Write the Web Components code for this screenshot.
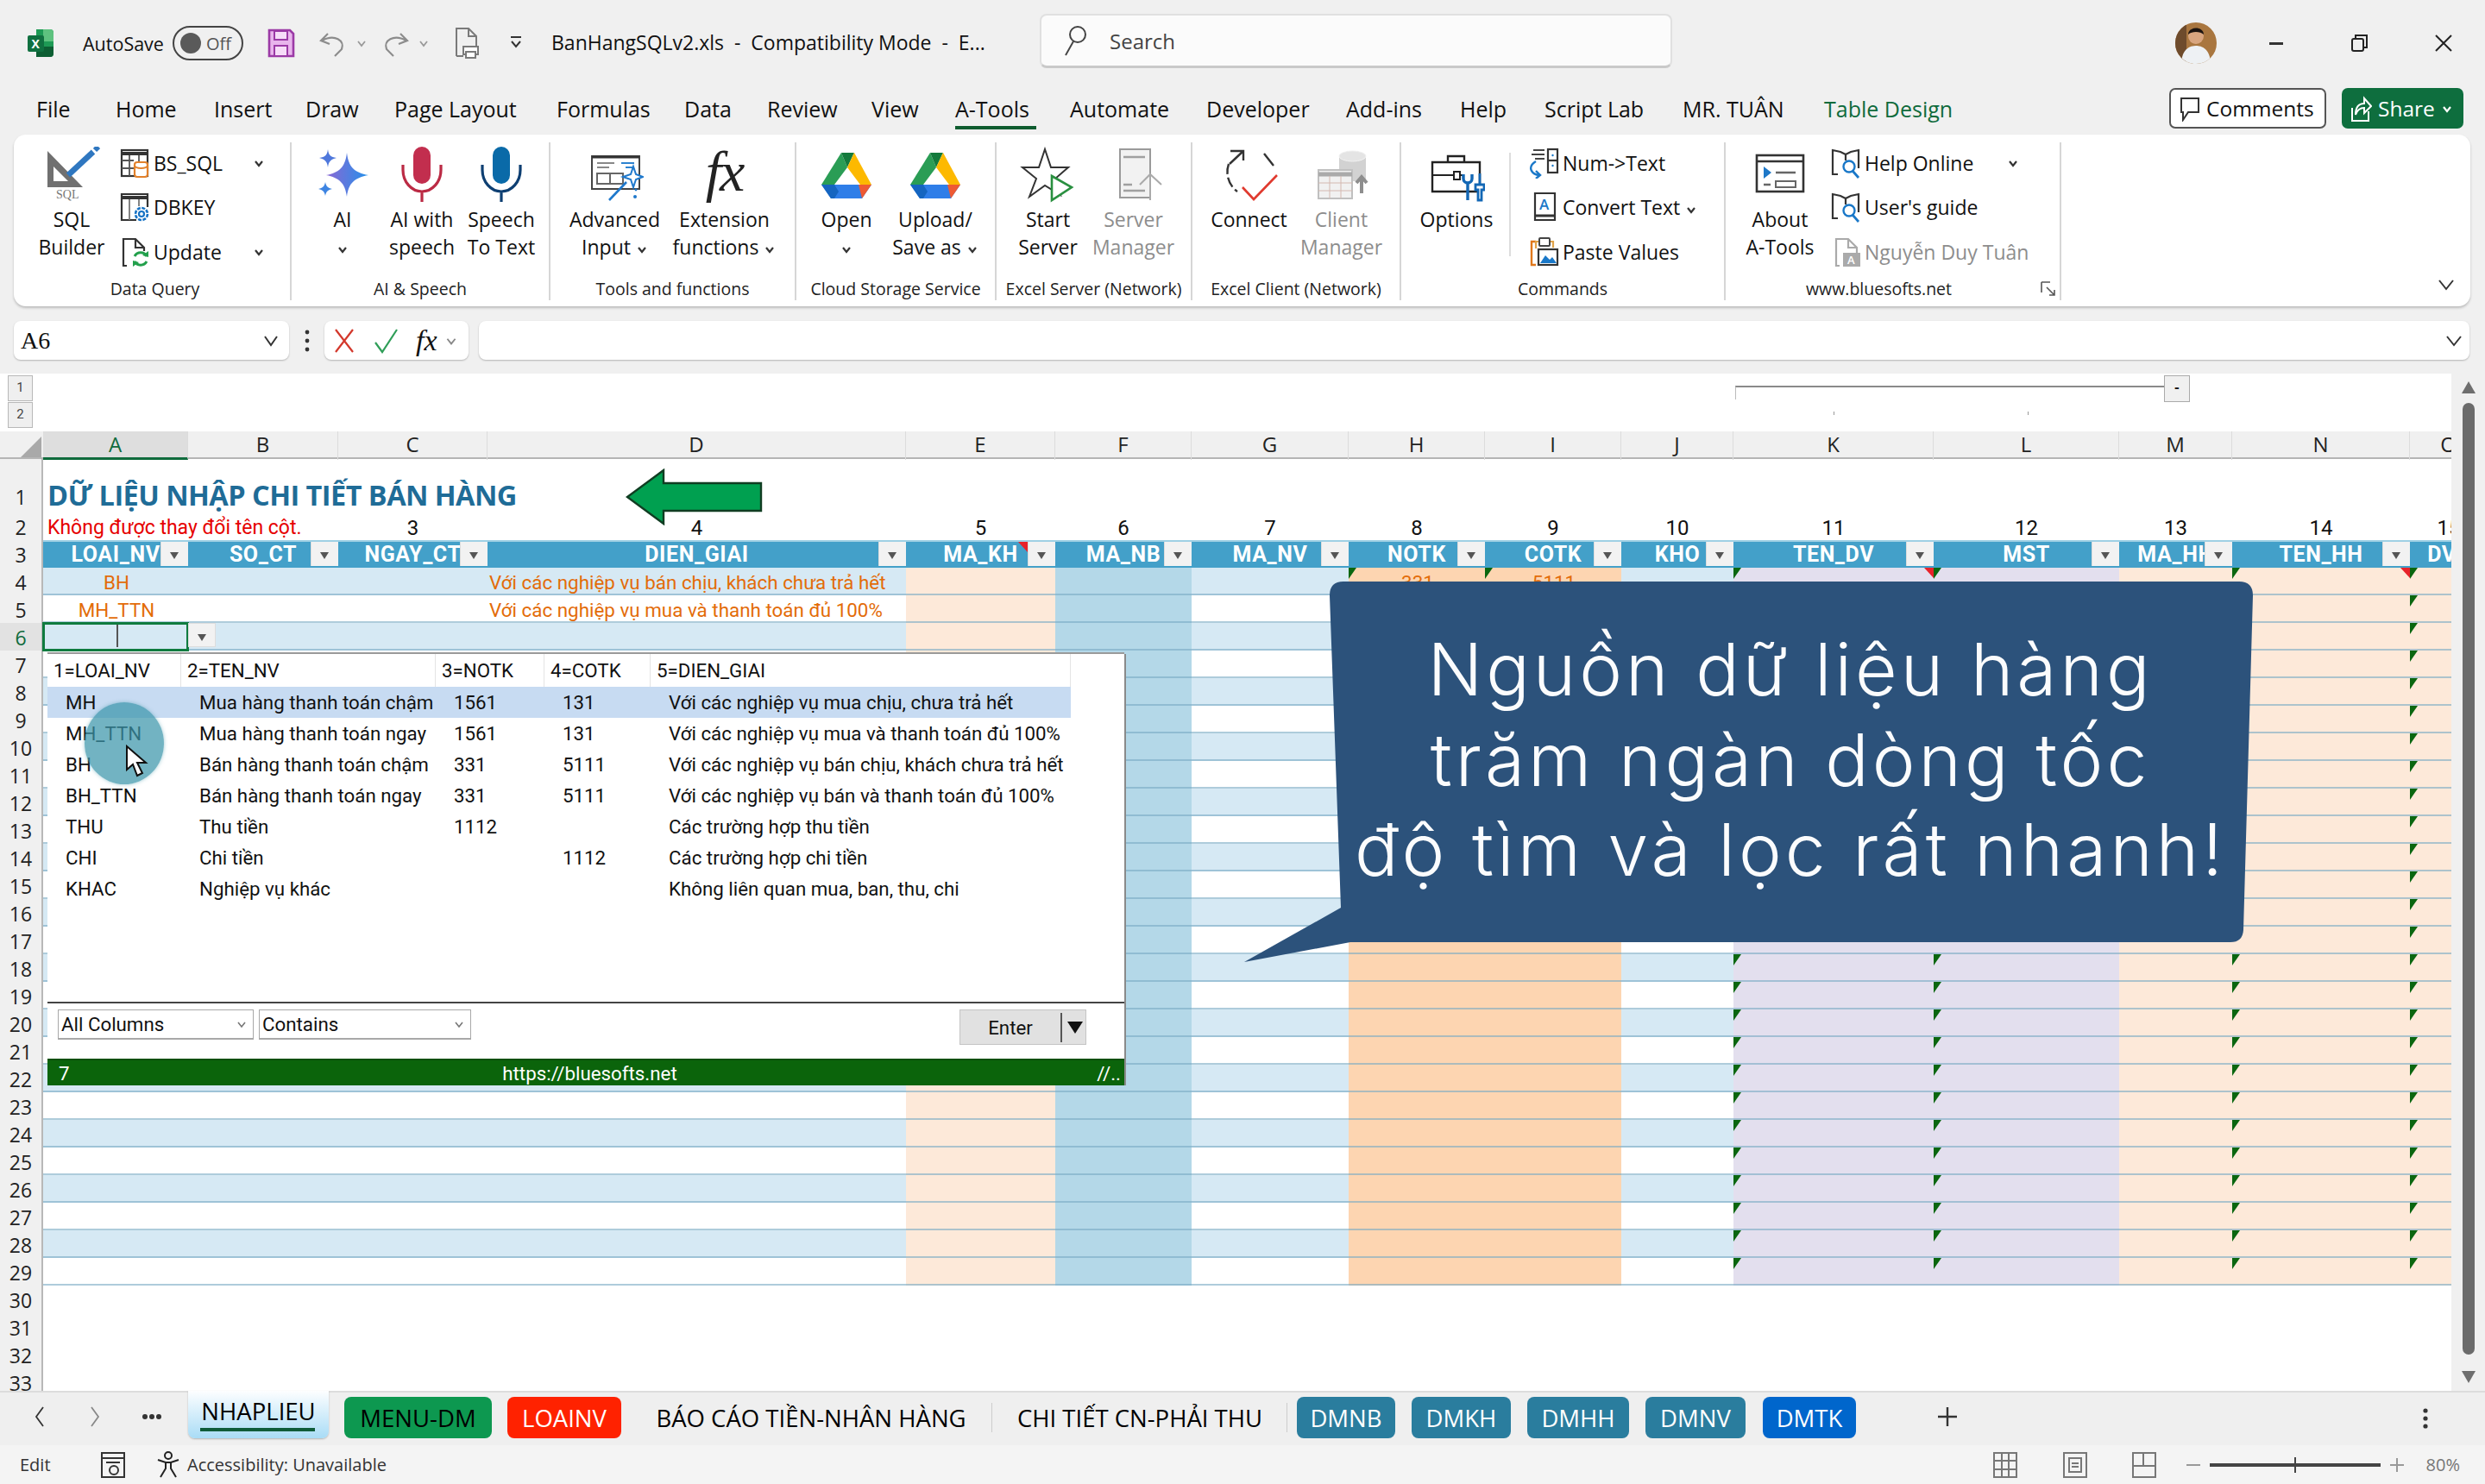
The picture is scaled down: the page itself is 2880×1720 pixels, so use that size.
<!DOCTYPE html>
<html lang="vi"><head><meta charset="utf-8"><title>Excel</title>
<style>
html,body{margin:0;padding:0;width:2880px;height:1720px;overflow:hidden;background:#f0f0f0;font-family:"Open Sans","Noto Sans",sans-serif;color:#111}
body{display:flex;flex-direction:column}
</style></head><body>
<x-titlebar></x-titlebar>
<x-tabs></x-tabs>
<x-ribbon>
  <x-group w="322" pl="22" gap="9" lp="7" label="Data Query">
    <x-big w="90" icon="sql">SQL<br>Builder</x-big>
    <x-smallcol><x-small icon="bssql" chev="1" w="190">BS_SQL</x-small><x-small icon="dbkey" w="190">DBKEY</x-small><x-small icon="update" chev="1" w="190">Update</x-small></x-smallcol>
  </x-group>
  <x-group w="300" pl="14" gap="2" label="AI &amp; Speech">
    <x-big w="90" icon="ai">AI<br><x-chev></x-chev></x-big>
    <x-big w="90" icon="micred">AI with<br>speech</x-big>
    <x-big w="90" icon="micblue">Speech<br>To Text</x-big>
  </x-group>
  <x-group w="285" pl="12" gap="2" label="Tools and functions">
    <x-big w="125" icon="adv">Advanced<br>Input <x-chev></x-chev></x-big>
    <x-big w="125" icon="fx">Extension<br>functions <x-chev></x-chev></x-big>
  </x-group>
  <x-group w="232" pl="8" gap="3" label="Cloud Storage Service">
    <x-big w="100" icon="drive">Open<br><x-chev></x-chev></x-big>
    <x-big w="100" icon="drive">Upload/<br>Save as <x-chev></x-chev></x-big>
  </x-group>
  <x-group w="227" pl="12" gap="4" label="Excel Server (Network)">
    <x-big w="95" icon="star">Start<br>Server</x-big>
    <x-big w="95" icon="srv" dim="1">Server<br>Manager</x-big>
  </x-group>
  <x-group w="242" pl="13" gap="2" label="Excel Client (Network)">
    <x-big w="105" icon="conn">Connect</x-big>
    <x-big w="105" icon="client" dim="1">Client<br>Manager</x-big>
  </x-group>
  <x-group w="376" pl="14" gap="0" label="Commands">
    <x-big w="100" icon="opt">Options</x-big>
    <x-vsep></x-vsep>
    <x-smallcol><x-small icon="num" w="200">Num-&gt;Text</x-small><x-small icon="conv" w="200">Convert Text <x-chev></x-chev></x-small><x-small icon="paste" w="200">Paste Values</x-small></x-smallcol>
  </x-group>
  <x-group w="389" pl="13" gap="7" label="www.bluesofts.net" launcher="1">
    <x-big w="100" icon="about">About<br>A-Tools</x-big>
    <x-smallcol><x-small icon="book" chev="1" w="240">Help Online</x-small><x-small icon="book" w="240">User's guide</x-small><x-small icon="adoc" dim="1" w="240">Nguyễn Duy Tuân</x-small></x-smallcol>
  </x-group>
</x-ribbon>
<x-formula></x-formula>
<x-sheet></x-sheet>
<x-sheettabs>
  <x-stab w="163" active="1" bg="linear-gradient(#fdfeff,#a9dcf6)" fg="#000">NHAPLIEU</x-stab>
  <x-stab w="171" ml="18" bg="#0d9850" fg="#000">MENU-DM</x-stab>
  <x-stab w="132" ml="18" bg="#ff2200" fg="#fff">LOAINV</x-stab>
  <x-stab w="420" ml="10" sep="1" fg="#000">BÁO CÁO TIỀN-NHÂN HÀNG</x-stab>
  <x-stab w="342" ml="0" sep="1" fg="#000">CHI TIẾT CN-PHẢI THU</x-stab>
  <x-stab w="114" ml="11" bg="#2a7d9e" fg="#fff">DMNB</x-stab>
  <x-stab w="115" ml="19" bg="#2a7d9e" fg="#fff">DMKH</x-stab>
  <x-stab w="118" ml="19" bg="#2a7d9e" fg="#fff">DMHH</x-stab>
  <x-stab w="116" ml="19" bg="#2a7d9e" fg="#fff">DMNV</x-stab>
  <x-stab w="108" ml="20" bg="#0066cc" fg="#fff">DMTK</x-stab>
</x-sheettabs>
<x-status></x-status>
<script>
const S=(w,h,vb,body,extra='')=>`<svg xmlns="http://www.w3.org/2000/svg" width="${w}" height="${h}" viewBox="0 0 ${vb}" ${extra}>${body}</svg>`;
const driveI=S(58,53,'58 53',`<path d="M23 0 L30 17 L15 37 H0Z" fill="#2a9d55"/><path d="M23 0 H38 L30 17Z" fill="#137a3c"/><path d="M38 0 L58 37 H45 L30 17Z" fill="#fdb900"/><path d="M0 37 H58 L47 53 H11Z" fill="#2f7ee8"/><path d="M0 37 H15 L20 45 L15 53 H11Z" fill="#1565c0"/><path d="M43 37 H58 L47 53Z" fill="#ee5a33"/>`);
const micI=(c,d)=>S(50,66,'50 66',`<rect x="15" y="0" width="20" height="43" rx="10" fill="${c}"/><path d="M3 21v6a22 25 0 0 0 44 0v-6M25 52v12" fill="none" stroke="${d}" stroke-width="3.2"/>`);
const IC={
 sql:S(66,66,'66 66',`<path fill-rule="evenodd" d="M5 5 L5 47 L46 47Z M12 23 L12 40 L29 40Z" fill="#707070"/><path d="M29 33 L58 6" stroke="#2f77c0" stroke-width="6.5"/><path d="M60 4 L64 0" stroke="#2f77c0" stroke-width="6"/><text x="15" y="60" font-family="Liberation Serif" font-size="14" fill="#777">SQL</text>`),
 ai:S(64,66,'64 66',`<defs><linearGradient id="g" x1="0" y1="0" x2="1" y2="0"><stop offset="0" stop-color="#8a68d4"/><stop offset="1" stop-color="#2590ea"/></linearGradient></defs><path d="M37 7 C39 24 46 30 62 33 C46 36 39 42 37 58 C35 42 28 36 13 33 C28 30 35 24 37 7Z" fill="url(#g)"/><path d="M15 3 C16 10 18 12 25 13 C18 15 16 17 15 24 C14 17 12 15 5 13 C12 12 14 10 15 3Z" fill="#4f78dc"/><path d="M12 41 C13 46 15 48 20 49 C15 50 13 52 12 57 C11 52 9 50 4 49 C9 48 11 46 12 41Z" fill="#3d84e2"/>`),
 micred:micI('#c22e4e','#bb2a44'),
 micblue:micI('#0a6aa8','#0e3f72'),
 adv:S(66,66,'66 66',`<rect x="6" y="11" width="55" height="38" fill="#fff" stroke="#444" stroke-width="2"/><path d="M6 12h55" stroke="#333" stroke-width="3"/><path d="M12 19h20M12 24h14" stroke="#888" stroke-width="2"/><path d="M40 19h15M45 24h8" stroke="#2d83d0" stroke-width="2"/><rect x="12" y="31" width="30" height="12" fill="none" stroke="#666" stroke-width="2"/><path d="M27 31v12" stroke="#666" stroke-width="2"/><path d="M26 62 L46 41" stroke="#1e78cc" stroke-width="2.6"/><path d="M54 23 l3 9 8 3-8 3-3 9-3-9-9-3 9-3z" fill="#fff" stroke="#1e78cc" stroke-width="2"/><circle cx="57" cy="50" r="1.4" fill="#1e78cc"/><circle cx="56" cy="58" r="2" fill="#1e78cc"/>`),
 fx:`<span style="font:italic 66px/60px 'Liberation Serif',serif;letter-spacing:-2px;color:#222;display:block;margin-top:-8px">fx</span>`,
 drive:driveI,
 star:S(66,66,'66 66',`<path d="M29 3 L36 24 L56 24 L41 37 L47 56 L29 45 L11 58 L19 37 L3 24 L22 24Z" fill="#fff" stroke="#333" stroke-width="2"/><path d="M37 34 L60 47 L37 62Z" fill="#fff" stroke="#2a9040" stroke-width="2.6"/>`),
 srv:S(66,66,'66 66',`<rect x="17" y="3" width="35" height="56" fill="#f2f2f2" stroke="#9a9a9a" stroke-width="2"/><path d="M21 12h25M21 44h10M21 51h25" stroke="#a0a0a0" stroke-width="2.4"/><path d="M52 62V32M40 44 L52 32 65 44" fill="none" stroke="#aaa" stroke-width="2"/>`),
 conn:S(66,66,'66 66',`<path d="M9 20 A28 28 0 0 0 19 52" fill="none" stroke="#333" stroke-width="2.4" stroke-dasharray="12 4"/><path d="M50 8 L61 22 M26 5 L10 20 M11 5 H26 V16" fill="none" stroke="#333" stroke-width="2.4"/><path d="M25 47 L38 61 L65 33" fill="none" stroke="#e03a2f" stroke-width="2.6"/>`),
 client:S(66,66,'66 66',`<path d="M30 11 a15.5 6 0 0 1 31 0 V40 H30Z" fill="#d2d2d2"/><ellipse cx="45.5" cy="11" rx="15.5" ry="6" fill="#e4e4e4" stroke="#f2f2f2"/><rect x="6" y="27" width="39" height="33" fill="#f1f1f1" stroke="#c0c0c0" stroke-width="2"/><path d="M6 32h39" stroke="#aaa" stroke-width="5"/><path d="M6 42h39M6 51h39M19 34v26M32 34v26" stroke="#d4b8b0"/><path d="M56 54 V36 M50 42 L56 35 62 42" fill="none" stroke="#8e8e8e" stroke-width="4"/>`),
 opt:S(66,66,'66 66',`<path d="M5 18h55v34H5z M23 18V11h19v7" fill="#fff" stroke="#222" stroke-width="2.4"/><path d="M5 33h25M38 33h4" stroke="#222" stroke-width="2.2"/><rect x="30" y="29" width="7" height="9" fill="#fff" stroke="#222" stroke-width="2"/><path d="M41 32v5a5 5 0 0 0 10 0v-5M46 42v20" fill="#fff" stroke="#1267b5" stroke-width="3.4"/><path d="M60 31v13M55 44h10v6h-3v12h-4V50h-3Z" fill="#fff" stroke="#1267b5" stroke-width="2.8"/>`),
 about:S(64,66,'64 66',`<rect x="5" y="10" width="54" height="42" fill="#fff" stroke="#333" stroke-width="2.6"/><path d="M5 17h54" stroke="#333" stroke-width="2.6"/><path d="M13 23 L22 30 13 37Z" fill="#1e78c8"/><path d="M27 30h23M13 44h8" stroke="#666" stroke-width="2.4"/><rect x="27" y="40" width="23" height="7" fill="#fff" stroke="#666" stroke-width="2"/>`),
 bssql:S(36,36,'36 36',`<rect x="2" y="3" width="30" height="30" fill="#fff" stroke="#333" stroke-width="2.2"/><path d="M2 7h30" stroke="#333" stroke-width="4"/><path d="M2 15h14M2 24h14M11 9v24M22 9v8" stroke="#555" stroke-width="1.8"/><rect x="17" y="17" width="15" height="17" rx="3" fill="#fff" stroke="#e2812b" stroke-width="2.2"/><path d="M17 21a7.5 3 0 0 0 15 0" fill="none" stroke="#e2812b" stroke-width="2"/>`),
 dbkey:S(36,36,'36 36',`<path d="M19 33H2V3H32V18" fill="#fff" stroke="#333" stroke-width="2.2"/><path d="M2 7h30" stroke="#333" stroke-width="4"/><path d="M11 9v24M22 9v8" stroke="#777" stroke-width="1.8"/><circle cx="25" cy="26" r="3" fill="none" stroke="#1672c4" stroke-width="2.2"/><circle cx="25" cy="26" r="7" fill="none" stroke="#1672c4" stroke-width="2.6" stroke-dasharray="4 1.5"/>`),
 update:S(36,36,'36 36',`<path d="M8 34H4V3h14l10 10v4M18 3v10h10" fill="none" stroke="#333" stroke-width="2.2"/><path d="M31 23a8 8 0 0 0-14 0M17 29a8 8 0 0 0 14 0" fill="none" stroke="#23a04c" stroke-width="3"/><path d="M26 22l7 2 0-7zM22 30l-7-2 0 7z" fill="#23a04c"/>`),
 num:S(36,36,'36 36',`<path d="M5 3h13M3 8h15M7 13h11" stroke="#444" stroke-width="2.2"/><rect x="22" y="2" width="11" height="27" fill="#fff" stroke="#333" stroke-width="2.2"/><path d="M22 15h11" stroke="#333" stroke-width="2.2"/><circle cx="27.5" cy="9" r="1.2" fill="#1a78c8"/><circle cx="27.5" cy="21" r="1.2" fill="#1a78c8"/><path d="M8 16 C-2 22 2 31 12 32 M8 27 L13 32 L8 36" fill="none" stroke="#1a78c8" stroke-width="2.4"/>`),
 conv:S(36,36,'36 36',`<path d="M7 2h23v31H7Z" fill="#fff" stroke="#333" stroke-width="2.2"/><path d="M7 28h23" stroke="#333" stroke-width="3"/><text x="12" y="21" font-family="Open Sans" font-size="17" font-weight="600" fill="#1a78c8">A</text>`),
 paste:S(36,36,'36 36',`<path d="M8 6H3V33H8" fill="none" stroke="#e0781c" stroke-width="2.4"/><path d="M28 13V6H8v8" fill="none" stroke="#e0a34a" stroke-width="2.2"/><rect x="12" y="2" width="12" height="9" rx="1" fill="#fff" stroke="#444" stroke-width="2"/><rect x="11" y="15" width="22" height="18" fill="#fff" stroke="#333" stroke-width="2.2"/><path d="M13 31 l6-9 5 5 3-3 5 7z" fill="#1a78c8"/>`),
 book:S(36,36,'36 36',`<path d="M8 31H2V3l9 2 6 3 6-3 9-2V24M17 8V15" fill="none" stroke="#333" stroke-width="2.2"/><circle cx="21" cy="22" r="6.5" fill="#fff" stroke="#1a78c8" stroke-width="2.4"/><path d="M25 27 L32 35" stroke="#1a78c8" stroke-width="2.8"/>`),
 adoc:S(36,36,'36 36',`<path d="M10 34H6V3h14l10 10v6M20 3v10h10" fill="none" stroke="#aaa" stroke-width="2.2"/><rect x="14" y="19" width="20" height="16" fill="#aaa"/><text x="19" y="32" font-family="Open Sans" font-size="13" font-weight="600" fill="#fff">A</text>`),
};
const chev=(c='#333',s=14,w=2.2)=>S(s,s,'14 14',`<path d="M3 5 L7 10 L11 5" fill="none" stroke="${c}" stroke-width="${w}"/>`);
const def=(name,css,html)=>customElements.define(name,class extends HTMLElement{connectedCallback(){if(this.shadowRoot)return;this.attachShadow({mode:'open'}).innerHTML=`<style>${css}</style>`+html(this)}});
const F='"Open Sans","Noto Sans",sans-serif', T='Roboto,"Noto Sans",sans-serif';

def('x-chev',':host{display:inline-block;vertical-align:middle;line-height:0}',()=>chev());

def('x-titlebar',`:host{display:flex;align-items:center;height:100px;flex:none;font:21.5px ${F};white-space:nowrap}
.s{display:flex;align-items:center;flex:none}
.tg{width:82px;height:40px;box-sizing:border-box;border:2.5px solid #444;border-radius:20px;display:flex;align-items:center;padding-left:7px;gap:6px;font-size:20px;color:#555}
.tg i{width:24px;height:24px;border-radius:50%;background:#5a5a5a}
.search{width:733px;height:63px;margin-top:-5px;background:#fbfbfb;border:2px solid #e0e0e0;border-bottom:3px solid #c9c9c9;border-radius:8px;box-sizing:border-box;padding-left:24px;gap:25px;font-size:24px;color:#444}
`,()=>`
<span class="s" style="margin-left:30px">${S(34,36,'34 36',`<path d="M12 2h16a4 4 0 0 1 4 4v24a4 4 0 0 1-4 4H12Z" fill="#1e9a55"/><path d="M20 2h8a4 4 0 0 1 4 4v10H20z" fill="#5ec27f"/><path d="M12 22h20v8a4 4 0 0 1-4 4H12z" fill="#0d5e33"/><rect x="2" y="9" width="19" height="19" rx="2" fill="#107040"/><text x="6.5" y="24" font-family="Open Sans" font-size="14" font-weight="700" fill="#fff">X</text>`)}</span>
<span style="margin-left:32px;width:104px">AutoSave</span>
<span class="s tg"><i></i>Off</span>
<span class="s" style="margin-left:28px">${S(32,34,'32 34',`<path d="M2 2h24l4 4v26H2Z" fill="#e8b4ec" stroke="#9b3aa6" stroke-width="2.6"/><rect x="8" y="3" width="15" height="10" fill="#f6dcf8" stroke="#9b3aa6" stroke-width="2"/><rect x="8" y="20" width="15" height="12" fill="#f6dcf8" stroke="#9b3aa6" stroke-width="2"/>`)}</span>
<span class="s" style="margin-left:28px">${S(32,34,'32 34',`<path d="M10 6 L2 14 L12 18M3 14 C18 6 30 14 26 24 L18 32" fill="none" stroke="#8c8c8c" stroke-width="2.2"/>`)}</span>
<span class="s" style="margin-left:10px">${chev('#999',14,1.8)}</span>
<span class="s" style="margin-left:16px">${S(32,34,'32 34',`<path d="M22 6 L30 14 L20 18M29 14 C14 6 2 14 6 24 L14 32" fill="none" stroke="#8c8c8c" stroke-width="2.2"/>`)}</span>
<span class="s" style="margin-left:10px">${chev('#999',14,1.8)}</span>
<span class="s" style="margin-left:28px">${S(30,38,'30 38',`<path d="M3 34V2h14l9 9v12M17 2v9h9M3 34h8" fill="none" stroke="#7a7a7a" stroke-width="2"/><rect x="11" y="23" width="17" height="9" fill="#fff" stroke="#7a7a7a" stroke-width="2"/><rect x="14" y="29" width="11" height="7" fill="#fff" stroke="#7a7a7a" stroke-width="2"/>`)}</span>
<span class="s" style="margin-left:34px">${S(16,18,'16 18',`<path d="M2 2h12M3 7 L8 13 13 7" fill="none" stroke="#333" stroke-width="2"/>`)}</span>
<span style="margin-left:33px;width:566px;font-size:23px;margin-top:-3px">BanHangSQLv2.xls&nbsp; - &nbsp;Compatibility Mode&nbsp; - &nbsp;E...</span>
<span class="s search">${S(30,38,'30 38',`<circle cx="18" cy="12" r="9" fill="none" stroke="#444" stroke-width="2"/><path d="M13 20 L4 36" stroke="#444" stroke-width="2"/>`)}Search</span>
<span class="s" style="margin-left:582px">${S(50,50,'50 50',`<clipPath id="c"><circle cx="25" cy="25" r="24"/></clipPath><g clip-path="url(#c)"><rect width="50" height="50" fill="#a9763f"/><rect x="0" y="0" width="14" height="50" fill="#6e4b2c"/><path d="M8 50 C8 32 18 28 25 28 C32 28 42 32 42 50Z" fill="#eef1f4"/><circle cx="25" cy="17" r="9" fill="#d8a57f"/><path d="M16 15 C16 5 34 5 34 15 C30 11 20 11 16 15Z" fill="#1c1410"/></g>`)}</span>
<span class="s" style="margin-left:60px;width:16px;height:3px;background:#333"></span>
<span class="s" style="margin-left:78px">${S(22,22,'22 22',`<rect x="2" y="6" width="13" height="14" rx="2" fill="none" stroke="#222" stroke-width="2"/><path d="M6 5V2h13v14h-3" fill="none" stroke="#222" stroke-width="2"/>`)}</span>
<span class="s" style="margin-left:75px">${S(22,22,'22 22',`<path d="M2 2 L20 20 M20 2 L2 20" stroke="#222" stroke-width="2"/>`)}</span>`);

const TABS=[['File',92],['Home',114],['Insert',106],['Draw',103],['Page Layout',188],['Formulas',148],['Data',96],['Review',121],['View',97],['A-Tools',133],['Automate',158],['Developer',162],['Add-ins',132],['Help',98],['Script Lab',160],['MR. TUÂN',164],['Table Design',240]];
def('x-tabs',`:host{display:flex;align-items:center;height:56px;flex:none;padding-left:42px;font:25px ${F};white-space:nowrap;box-sizing:border-box;width:2880px}
.t{flex:none;position:relative;line-height:51px;height:54px}
.on{font-weight:500}
.on::after{content:"";position:absolute;left:0;width:94px;bottom:5px;height:4px;background:#0e5c2f}
.btn{height:47px;box-sizing:border-box;border-radius:7px;display:flex;align-items:center;margin-top:-5px;flex:none;font-size:24.5px}
.c{margin-left:auto;width:182px;border:2px solid #555;background:#fff;padding-left:10px;gap:7px}
.sh{margin-left:18px;margin-right:25px;width:141px;background:#0e6e3e;color:#fff;padding-left:9px;gap:7px}
`,()=>TABS.map(([n,w])=>`<span class="t ${n=='A-Tools'?'on':''}" style="width:${w}px;${n=='Table Design'?'color:#0f6b3c':''}">${n}</span>`).join('')+`
<span class="btn c">${S(24,30,'24 30',`<path d="M2 3h20v16H10L4 28v-9H2Z" fill="none" stroke="#333" stroke-width="2"/>`)}Comments</span>
<span class="btn sh">${S(26,34,'26 34',`<path d="M3 16v15h19V20" fill="none" stroke="#fff" stroke-width="2"/><path d="M7 24 C7 14 12 11 17 11V5l8 9-8 8v-6C12 16 9 18 7 24Z" fill="none" stroke="#fff" stroke-width="2"/>`)}Share${chev('#fff')}</span>`);

def('x-ribbon',`:host{display:flex;flex:none;margin-left:16px;width:2847px;height:199px;box-sizing:border-box;padding:9px 0 7px;background:#fff;border-radius:14px;box-shadow:0 2px 3px rgba(0,0,0,.22)}
.col{margin-left:auto;align-self:flex-end;margin-right:17px;margin-bottom:9px;line-height:0}`,()=>`<slot></slot><span class="col">${S(22,18,'22 18',`<path d="M3 4 L11 14 L19 4" fill="none" stroke="#333" stroke-width="2"/>`)}</span>`);

def('x-group',`:host{display:flex;flex-direction:column;flex:none;box-sizing:border-box;border-right:2px solid #d6d6d6;font:23px/32px ${F};white-space:nowrap}
.c{flex:1;display:flex;min-height:0}
.l{height:26px;flex:none;font-size:19.5px;line-height:26px;text-align:center;color:#222;display:flex;justify-content:center;align-items:center;position:relative}
.la{position:absolute;right:3px;top:3px;line-height:0}`,h=>{const w=h.getAttribute('w'),pl=h.getAttribute('pl'),g=h.getAttribute('gap');h.style.width=w+'px';
return `<div class="c" style="padding-left:${pl}px;gap:${g}px"><slot></slot></div><div class="l" style="padding-left:${h.getAttribute('lp')||0}px;${h.hasAttribute('launcher')?'padding-right:32px':''}">${h.getAttribute('label')}${h.hasAttribute('launcher')?`<span class="la">${S(20,20,'20 20',`<path d="M2 2h10M2 2v12M8 8 L17 17M17 11v6h-6" fill="none" stroke="#555" stroke-width="1.6"/>`)}</span>`:''}</div>`});

def('x-vsep',`:host{display:block;width:2px;height:120px;margin:12px 19px 0 11px;background:#ddd;flex:none}`,()=>'');
def('x-smallcol',`:host{display:flex;flex-direction:column;flex:none;margin-top:-2px}`,()=>'<slot></slot>');
def('x-big',`:host{display:flex;flex-direction:column;align-items:center;text-align:center;flex:none;padding-top:3px;box-sizing:border-box}
.i{height:70px;display:flex;align-items:center;justify-content:center;flex:none;line-height:0}
.i span{line-height:66px}`,h=>{h.style.width=h.getAttribute('w')+'px';if(h.hasAttribute('dim'))h.style.color='#8d8d8d';return `<div class="i">${IC[h.getAttribute('icon')]}</div><div><slot></slot></div>`});
def('x-small',`:host{display:flex;align-items:center;height:51.5px;flex:none;gap:7px}
.i{width:40px;display:flex;justify-content:center;line-height:0;flex:none}
.c{margin-left:auto;margin-right:20px;line-height:0}`,h=>{h.style.width=h.getAttribute('w')+'px';if(h.hasAttribute('dim'))h.style.color='#8d8d8d';return `<span class="i">${IC[h.getAttribute('icon')]}</span><span style="margin-left:-6px"><slot></slot></span>${h.hasAttribute('chev')?`<span class="c">${chev()}</span>`:''}`});

def('x-formula',`:host{display:flex;align-items:center;flex:none;height:45px;margin:17px 0 16px;padding-left:16px;font:28px "Liberation Serif",serif}
.b{height:45px;box-sizing:border-box;background:#fff;border-radius:8px;box-shadow:0 1px 2px rgba(0,0,0,.25);display:flex;align-items:center;flex:none}
.dots{width:41px;display:flex;justify-content:center;flex:none}
`,()=>`<span class="b" style="width:319px;padding:0 12px 0 8px;justify-content:space-between">A6${S(18,14,'18 14',`<path d="M2 2 L9 12 L16 2" fill="none" stroke="#333" stroke-width="2"/>`)}</span>
<span class="dots">${S(6,30,'6 30',`<circle cx="3" cy="5" r="2.4" fill="#333"/><circle cx="3" cy="15" r="2.4" fill="#333"/><circle cx="3" cy="25" r="2.4" fill="#333"/>`)}</span>
<span class="b" style="width:167px;padding-left:11px;gap:20px">${S(26,32,'26 32',`<path d="M2 3 L22 29M22 3 L2 29" stroke="#d3382c" stroke-width="2.2"/>`)}${S(30,32,'30 32',`<path d="M2 18 L10 29 L27 3" fill="none" stroke="#2f9e58" stroke-width="2.2"/>`)}<span style="font:italic 34px 'Liberation Serif',serif;margin-left:-1px">fx</span><span style="margin-left:-12px;line-height:0">${chev('#888',16,1.6)}</span></span>
<span class="b" style="width:2307px;margin-left:12px;justify-content:flex-end;padding-right:8px">${S(20,14,'20 14',`<path d="M2 2 L10 12 L18 2" fill="none" stroke="#333" stroke-width="2"/>`)}</span>`);

const COLS=[['A',168,'LOAI_NV'],['B',174,'SO_CT'],['C',173,'NGAY_CT'],['D',485,'DIEN_GIAI'],['E',173,'MA_KH'],['F',158,'MA_NB'],['G',182,'MA_NV'],['H',158,'NOTK'],['I',158,'COTK'],['J',130,'KHO'],['K',232,'TEN_DV'],['L',215,'MST'],['M',131,'MA_HH'],['N',206,'TEN_HH'],['O',90,'DVT']];
const FILL={E:'#fde9d9',F:'#b4d8e8',H:'#fdd5b1',I:'#fdd5b1',K:'#e3dfee',L:'#e3dfee',M:'#fde9d9',N:'#fde9d9',O:'#fde9d9'};
function buildGrid(){
 const cols=COLS.map(c=>c[1]+'px').join(' ');let o='';
 const tri=(t)=>`<i class="${t}"></i>`;
 for(let r=1;r<=33;r++){
  o+=`<div class="rh ${r==6?'sel':''} ${r==1?'r1':''}">${r}</div>`;
  COLS.forEach(([L,w,name],i)=>{
   let cls='c',txt='',ex='',st='';
   if(r==1){ if(L=='A'){cls+=' title';txt='DỮ LIỆU NHẬP CHI TIẾT BÁN HÀNG'} }
   else if(r==2){ if(L=='A'){cls+=' warn';txt='Không được thay đổi tên cột.'} else if(L!='B'){cls+=' num';txt=i+1} }
   else if(r==3){ cls+=' hd';txt=name;ex=`<b class="f"></b>`; if(L=='E')ex+=tri('rt') }
   else if(r<=29){
     cls+=' d';const band=r%2==0?'#d6e9f4':'#fff';st=`background:${FILL[L]||band}`;
     if(r==4){ if(L=='A'){txt='BH';cls+=' o ctr'} if(L=='D'){txt='Với các nghiệp vụ bán chịu, khách chưa trả hết';cls+=' o'} if(L=='H'){txt='331';cls+=' o ctr'} if(L=='I'){txt='5111';cls+=' o ctr'} }
     if(r==5){ if(L=='A'){txt='MH_TTN';cls+=' o ctr'} if(L=='D'){txt='Với các nghiệp vụ mua và thanh toán đủ 100%';cls+=' o'} }
     if('KLNO'.includes(L)) ex+=tri('gr');
     if(r==4&&'HI'.includes(L)) ex+=tri('gr');
     if(r==4&&(L=='K'||L=='N')) ex+=tri('rt');
     if(r==6&&L=='A') { cls+=' act'; ex+=`<u class="car"></u><b class="dd"></b>`; }
   }
   o+=`<div class="${cls}" style="${st}">${txt?`<span>${txt}</span>`:''}${ex}</div>`;
  });
 }
 return {cols,o};
}
def('x-sheet',`:host{display:flex;flex:none;height:1179px;width:2880px;overflow:hidden}
.main{width:2841px;flex:none;background:#fff;position:relative;overflow:hidden;display:flex;flex-direction:column}
.out{height:67px;flex:none;display:flex;padding-top:2px;box-sizing:border-box}
.obtn{width:29px;height:30px;margin-left:9px;box-sizing:border-box;border:1.5px solid #b8b8b8;background:#efefef;font:15px/27px ${T};text-align:center;color:#444}
.ol{margin-left:1973px;display:flex;flex-direction:column}
.ol1{display:flex;height:31px}
.line{width:497px;height:16px;border-top:2.5px solid #8a8a8a;border-left:1.5px solid #bbb;box-sizing:border-box;margin-top:12px}
.mbox{width:30px;height:31px;box-sizing:border-box;border:1.5px solid #aaa;background:#f0f0f0;font:700 16px/28px ${T};text-align:center}
.tick{display:flex;padding-left:114px;gap:224px;margin-top:11px}
.tick i{width:1px;height:4px;background:#999}
.ch{display:grid;height:32px;flex:none;background:#f0f0f0;font:24px/29px ${F};color:#222;box-sizing:border-box;border-bottom:2.5px solid #b5b5b5}
.ch div{text-align:center;border-right:1px solid #dcdcdc}
.ch .on{background:#dedede;color:#0f6b3c;border-bottom:3px solid #0f6b3c;height:29.5px}
.sa{display:flex;align-items:flex-end;justify-content:flex-end;padding:0 2px 3px 0;border:0!important}
.g{display:grid;font:22.4px/26px ${T};flex:1;min-height:0;overflow:hidden;align-content:start;grid-template-rows:62px repeat(32,32px)}
.rh{background:#f0f0f0;font:23px/26px ${F};text-align:center;color:#222;border-right:2px solid #b8b8b8;box-sizing:border-box;display:flex;justify-content:center;align-items:center;position:relative;padding-top:2px;min-height:0}
.rh.r1{align-items:flex-end;padding-bottom:5px}
.rh.sel{background:#e2e2e2;color:#0f6b3c}
.c{position:relative;white-space:nowrap;display:flex;align-items:center;box-sizing:border-box;min-width:0;min-height:0}
.title{overflow:visible;align-items:flex-end;padding:0 0 1px 5px;color:#1f6c97;font:700 32.5px/38px "Open Sans","Noto Sans",sans-serif;letter-spacing:-.55px}
.warn{color:#e60000;padding:3px 0 0 5px;font-size:23px}
.num{justify-content:center;font-size:24px;padding-top:3px}
.hd{background:#43a0c9;color:#fff;font-weight:700;font-size:25px;letter-spacing:.6px;justify-content:center;overflow:hidden;border-top:2px solid #9fd0e4}
.f{position:absolute;right:0;top:0;bottom:2px;width:31px;background:#f2f2f2;border-left:1px solid #ddd}
.f::after,.dd::after{content:"";position:absolute;left:10px;top:12px;border:5.5px solid transparent;border-top:8px solid #555;border-bottom:0}
.d{border-bottom:2.5px solid rgba(120,170,195,.6);padding-top:3px}
.o{color:#e36c09;padding-left:2px;overflow:visible}
.ctr{justify-content:center}
.act{outline:3px solid #0f7b3f;outline-offset:-2px;z-index:2}
.car{position:absolute;left:85px;top:2px;bottom:2px;width:1.5px;background:#555}
.dd{position:absolute;left:100%;top:0;bottom:2px;width:32px;margin-left:0;background:#f2f2f2;border:1px solid #ddd;box-sizing:border-box}
.gr{position:absolute;left:0;top:0;width:9px;height:13px;background:#0a660f;clip-path:polygon(0 0,100% 0,0 100%);z-index:1}
.rt{position:absolute;right:0;top:0;width:11px;height:12px;background:#e8222a;clip-path:polygon(0 0,100% 0,100% 100%);z-index:1}
.hd .rt{right:32px}
.arrow{position:absolute;left:725px;top:110px;line-height:0}
.sb{width:39px;flex:none;background:#f0f0f0;display:flex;flex-direction:column;align-items:center;padding:9px 0 0 0;box-sizing:border-box}
.up{width:0;height:0;border:8px solid transparent;border-bottom:14px solid #6e6e6e;border-top:0}
.dn{width:0;height:0;border:8px solid transparent;border-top:14px solid #6e6e6e;border-bottom:0;margin-top:19px}
.th{width:14px;height:1103px;border-radius:7px;background:#6b6b6b;margin-top:11px}
`,()=>{const {cols,o}=buildGrid();
 return `<div class="main">
 <div class="out"><div><div class="obtn">1</div><div class="obtn" style="margin-top:1px">2</div></div>
 <div class="ol"><div class="ol1"><div class="line"></div><div class="mbox">-</div></div><div class="tick"><i></i><i></i></div></div></div>
 <div class="ch" style="grid-template-columns:50px ${cols}"><div class="sa">${S(24,24,'24 24','<path d="M24 0V24H0Z" fill="#a9a9a9"/>')}</div>${COLS.map(c=>`<div class="${c[0]=='A'?'on':''}">${c[0]}</div>`).join('')}</div>
 <div class="g" style="grid-template-columns:50px ${cols}">${o}</div>
 <div class="arrow">${S(160,66,'160 66','<path d="M44 2 L2 33 L44 64 V49 H157 V17 H44Z" fill="#00a050" stroke="#103d22" stroke-width="2.4"/>')}</div>
 <x-popup></x-popup>
 <x-callout></x-callout>
 </div>
 <div class="sb"><div class="up"></div><div class="th"></div><div class="dn"></div></div>`});

const POPROWS=[['MH','Mua hàng thanh toán chậm','1561','131','Với các nghiệp vụ mua chịu, chưa trả hết'],['MH_TTN','Mua hàng thanh toán ngay','1561','131','Với các nghiệp vụ mua và thanh toán đủ 100%'],['BH','Bán hàng thanh toán chậm','331','5111','Với các nghiệp vụ bán chịu, khách chưa trả hết'],['BH_TTN','Bán hàng thanh toán ngay','331','5111','Với các nghiệp vụ bán và thanh toán đủ 100%'],['THU','Thu tiền','1112','','Các trường hợp thu tiền'],['CHI','Chi tiền','','1112','Các trường hợp chi tiền'],['KHAC','Nghiệp vụ khác','','','Không liên quan mua, ban, thu, chi']];
def('x-popup',`:host{position:absolute;left:55px;top:325px;width:1248px;height:500px;background:#fff;display:flex;flex-direction:column;font:22.3px/30px ${T};color:#111;box-sizing:border-box;box-shadow:0 -2px 0 #9a9a9a,2px 0 0 #8a8a8a;white-space:nowrap;z-index:5}
.h,.r{display:grid;grid-template-columns:155px 295px 126px 123px 487px;width:1186px}
.h{height:38px;align-items:center}
.h span{padding-left:7px;height:38px;line-height:38px;border-right:1.5px solid #e4e4e4;box-sizing:border-box}
.list{height:365px;flex:none}
.r{height:36px;align-items:center}
.r span{padding-left:21px}
.r:first-child{background:#c7dbf2}
.foot{height:66px;flex:none;border-top:2.5px solid #444;display:flex;padding:7px 44px 0 12px;box-sizing:border-box;gap:6px}
.sel{height:35px;box-sizing:border-box;border:1.5px solid #a8a8a8;border-bottom-width:2.5px;display:flex;align-items:center;justify-content:space-between;padding:0 6px 0 3px}
.en{margin-left:auto;width:147px;height:41px;background:#e1e1e1;border:1.5px solid #c4c4c4;box-sizing:border-box;display:flex;align-items:center}
.en b{font-weight:400;width:116px;text-align:center}
.en i{width:2px;height:34px;background:#555}
.en u{margin-left:6px;width:0;height:0;border:9px solid transparent;border-top:14px solid #111;border-bottom:0}
.bar{height:31px;flex:none;background:#0b640b;border-top:2px solid #0a4f0a;color:#fff;display:grid;grid-template-columns:1fr 1fr 1fr;align-items:center;padding:0 4px 3px 13px;box-sizing:border-box}
.circle{position:absolute;left:43px;top:56px;width:92px;height:95px;border-radius:50%;background:rgba(60,150,170,.72);box-shadow:0 0 4px rgba(60,150,170,.5)}
.cur{position:absolute;left:90px;top:105px;line-height:0}
`,()=>`<div class="h"><span>1=LOAI_NV</span><span>2=TEN_NV</span><span>3=NOTK</span><span>4=COTK</span><span>5=DIEN_GIAI</span></div>
<div class="list">${POPROWS.map(r=>`<div class="r">${r.map(t=>`<span>${t}</span>`).join('')}</div>`).join('')}</div>
<div class="foot"><div class="sel" style="width:227px">All Columns${chev('#777',14,1.6)}</div><div class="sel" style="width:246px">Contains${chev('#777',14,1.6)}</div><div class="en"><b>Enter</b><i></i><u></u></div></div>
<div class="bar"><span>7</span><span style="text-align:center">https://bluesofts.net</span><span style="text-align:right">//..</span></div>
<div class="circle"></div>
<div class="cur">${S(28,38,'28 38','<path d="M2 2 V29 L9 23 L14 36 L20 33 L14 21 L24 21Z" fill="#fff" stroke="#111" stroke-width="2"/>')}</div>`);

def('x-callout',`:host{position:absolute;left:1440px;top:237px;width:1180px;height:450px;z-index:6}
svg{position:absolute;left:0;top:0}
.t{position:absolute;left:115px;top:54px;width:1040px;text-align:center;font:300 84px/104.5px Inter,"Open Sans",sans-serif;letter-spacing:4px;color:#fbfcfd;white-space:nowrap}`,()=>`${S(1180,450,'1180 450','<path d="M117 4 H1155 Q1171 4 1171 20 L1160 408 Q1159 422 1145 422 H125 L2 445 L114 382 L101 20 Q101 4 117 4Z" fill="#2c527b"/>')}
<div class="t">Nguồn dữ liệu hàng<br>trăm ngàn dòng tốc<br>độ tìm và lọc rất nhanh!</div>`);

def('x-sheettabs',`:host{display:flex;align-items:flex-start;flex:none;height:63px;box-sizing:border-box;border-top:0;background:linear-gradient(#dcdcdc 0 2px,#efefef 2px);font:27.5px ${F};white-space:nowrap;position:relative}
.nav{width:218px;height:55px;display:flex;align-items:center;flex:none;padding-left:35px;box-sizing:border-box;margin-top:2px;gap:42px}
.plus{margin-left:94px;margin-top:18px;line-height:0}
.dots{margin-left:auto;margin-right:66px;margin-top:20px;line-height:0}`,()=>`<div class="nav">${S(22,26,'14 26','<path d="M11 2 L3 13 L11 24" fill="none" stroke="#333" stroke-width="1.8"/>')}${S(22,26,'14 26','<path d="M3 2 L11 13 L3 24" fill="none" stroke="#888" stroke-width="1.8"/>')}${S(26,8,'26 8','<circle cx="5" cy="4" r="3" fill="#333"/><circle cx="13" cy="4" r="3" fill="#333"/><circle cx="21" cy="4" r="3" fill="#333"/>')}</div><slot></slot>
<span class="plus">${S(24,24,'24 24','<path d="M12 1V23M1 12H23" stroke="#333" stroke-width="2.4"/>')}</span>
<span class="dots">${S(6,24,'6 24','<circle cx="3" cy="3" r="2.6" fill="#333"/><circle cx="3" cy="12" r="2.6" fill="#333"/><circle cx="3" cy="21" r="2.6" fill="#333"/>')}</span>`);

def('x-stab',`:host{display:flex;flex:none;box-sizing:border-box;align-items:center;justify-content:center;margin-top:7px;height:48px;border-radius:8px;position:relative}
:host([sep])::after{content:"";position:absolute;right:0;top:7px;bottom:7px;width:1.5px;background:#ccc}
:host([active]){margin-top:0;height:55px;border-radius:0 0 8px 8px;align-items:flex-start;padding-top:5px;box-shadow:0 1px 2px rgba(0,0,0,.25)}
:host([active])::after{content:"";position:absolute;left:14px;right:16px;bottom:8px;height:4px;background:#0f5c3a}`,h=>{h.style.width=h.getAttribute('w')+'px';h.style.marginLeft=(h.getAttribute('ml')||0)+'px';if(h.getAttribute('bg'))h.style.background=h.getAttribute('bg');h.style.color=h.getAttribute('fg');return '<span><slot></slot></span>'});

def('x-status',`:host{display:flex;align-items:center;flex:none;height:45px;background:#f4f4f4;font:20px ${F};color:#333;white-space:nowrap}
.s{display:flex;align-items:center;flex:none;line-height:0}`,()=>`<span style="margin-left:23px;width:92px">Edit</span>
<span class="s">${S(32,32,'32 32','<rect x="3" y="2" width="26" height="28" fill="none" stroke="#333" stroke-width="2"/><path d="M3 8h26M8 13h16" stroke="#333" stroke-width="2"/><circle cx="17" cy="22" r="5" fill="none" stroke="#333" stroke-width="2"/>')}</span>
<span class="s" style="margin-left:33px">${S(30,32,'30 32','<circle cx="15" cy="5" r="4" fill="none" stroke="#222" stroke-width="2"/><path d="M3 10 L12 13 H18 L27 10 M12 13 V20 L6 30 M18 13 V20 L24 30" fill="none" stroke="#222" stroke-width="2"/>')}</span>
<span style="margin-left:7px">Accessibility: Unavailable</span>
<span class="s" style="margin-left:auto">${S(30,32,'30 32','<rect x="2" y="2" width="26" height="28" fill="none" stroke="#777" stroke-width="2"/><path d="M2 11h26M2 21h26M11 2v28M19 2v28" stroke="#777" stroke-width="2"/>')}</span>
<span class="s" style="margin-left:51px">${S(30,32,'30 32','<rect x="2" y="2" width="26" height="28" fill="none" stroke="#777" stroke-width="2"/><rect x="8" y="8" width="14" height="16" fill="none" stroke="#777" stroke-width="2"/><path d="M11 14h8M11 18h8" stroke="#777" stroke-width="2"/>')}</span>
<span class="s" style="margin-left:50px">${S(30,32,'30 32','<rect x="2" y="2" width="26" height="28" fill="none" stroke="#777" stroke-width="2"/><path d="M2 17h26M14 2v15" stroke="#777" stroke-width="2"/>')}</span>
<span class="s" style="margin-left:34px;width:16px;height:2px;background:#999"></span>
<span class="s" style="margin-left:11px;width:198px;height:4px;background:#444;justify-content:center"><i style="width:2px;height:18px;background:#444"></i></span>
<span class="s" style="margin-left:11px">${S(16,16,'16 16','<path d="M8 0V16M0 8H16" stroke="#999" stroke-width="2"/>')}</span>
<span style="margin-left:26px;margin-right:29px;color:#777">80%</span>`);
</script>
</body></html>
